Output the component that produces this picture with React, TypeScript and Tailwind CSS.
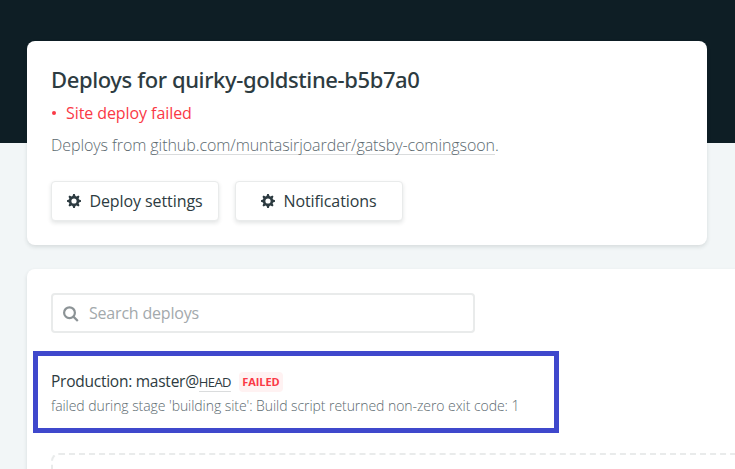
function Gear() {
  return (
    <svg width="14" height="16" viewBox="0 0 14 16" fill="currentColor" className="shrink-0">
      <path
        fillRule="evenodd"
        d="M14 8.77v-1.6l-1.94-.64-.45-1.09.88-1.84-1.13-1.13-1.81.91-1.09-.45-.69-1.92h-1.6l-.63 1.94-1.11.45-1.84-.88-1.13 1.13.91 1.81-.45 1.09L0 7.23v1.59l1.94.64.45 1.09-.88 1.84 1.13 1.13 1.81-.91 1.09.45.69 1.92h1.59l.63-1.94 1.11-.45 1.84.88 1.13-1.13-.92-1.81.47-1.09L14 8.75v.02zM7 10.6a2.6 2.6 0 1 1 0-5.2 2.6 2.6 0 0 1 0 5.2z"
      />
    </svg>
  );
}

function ActionButton({ label }: { label: string }) {
  return (
    <button className="flex h-10 w-[168px] items-center justify-center gap-2 rounded border border-[#e9ebeb] bg-white font-['Open_Sans'] text-base font-medium whitespace-nowrap text-[#2d3b41] shadow-[0_2px_4px_rgba(14,30,37,0.12)]">
      <Gear />
      <span className="tracking-[-0.08px]">{label}</span>
    </button>
  );
}

export default function App() {
  return (
    <div className="h-[469px] w-full overflow-hidden bg-[#f2f6f7] font-['Noto_Sans','Open_Sans',sans-serif]">
      <div className="h-[143px] bg-[#0e1e25]" />
      <main className="relative -mt-[102px] ml-[27px] flex flex-col gap-6">
        <section className="h-[204px] w-[680px] rounded-lg bg-white px-6 pt-6 whitespace-nowrap shadow-[0_2px_4px_rgba(14,30,37,0.12)]">
          <h1 className="h-8 text-[22px] leading-[29px] font-medium tracking-[-0.39px] text-[#2d3b41]">
            Deploys for quirky-goldstine-b5b7a0
          </h1>
          <p className="flex h-8 items-center font-['Open_Sans'] text-base leading-8 font-medium text-[#fa3946]">
            <span className="mr-[10px] ml-px size-1 rounded-full bg-[#fa3946]" />
            <span className="tracking-[-0.08px]">Site deploy failed</span>
          </p>
          <p className="h-8 font-['Open_Sans'] text-base leading-8 font-light tracking-[-0.07px] text-[#5c6a70]">
            Deploys from <a className="inline-block h-[19px] border-b border-[#dadcdd] leading-[18px]">github.com/muntasirjoarder/gatsby-comingsoon</a>.
          </p>
          <div className="mt-5 flex gap-4">
            <ActionButton label="Deploy settings" />
            <ActionButton label="Notifications" />
          </div>
        </section>

        <section className="h-[260px] w-[900px] rounded-lg bg-white pt-6 whitespace-nowrap shadow-[0_2px_4px_rgba(14,30,37,0.12)]">
          <div className="ml-6 flex h-10 w-[424px] items-center rounded border-2 border-[#e9ebeb] pl-[10px] text-[#a3a9ac]">
            <svg width="16" height="16" viewBox="0 0 16 16" fill="none" stroke="#8c9396" strokeWidth="2.2" className="mt-px mr-[10px]">
              <circle cx="6.5" cy="6.7" r="5.4" />
              <path d="M10.4 10.6L14.8 15" />
            </svg>
            <span className="font-['Open_Sans'] text-base tracking-[-0.2px]">Search deploys</span>
          </div>
          <div className="mt-[18px] ml-1.5 h-[82px] w-[526px] border-[5px] border-[#3f48cc] pt-[14px] pl-[13px] font-['Open_Sans']">
            <div className="flex h-6 items-center text-[15.5px] text-[#2d3b41]">
              <span className="tracking-[-0.25px]">Production: master@</span>
              <span className="mt-px h-[18px] border-b border-[#dadcdd] text-[13px] leading-[17px] tracking-[-0.6px]">HEAD</span>
              <span className="ml-2 flex h-5 w-11 items-center justify-center rounded bg-[#fff2f2] text-[11px] font-bold tracking-[-0.1px] text-[#fa3946]">
                FAILED
              </span>
            </div>
            <p className="h-6 text-[14px] leading-6 font-light tracking-[-0.06px] text-[#5c6a70]">
              failed during stage 'building site': Build script returned non-zero exit code: 1
            </p>
          </div>
          <div className="mt-5 ml-6 h-20 w-[852px] rounded-lg border-2 border-dashed border-[#e9ebeb]" />
        </section>
      </main>
    </div>
  );
}
